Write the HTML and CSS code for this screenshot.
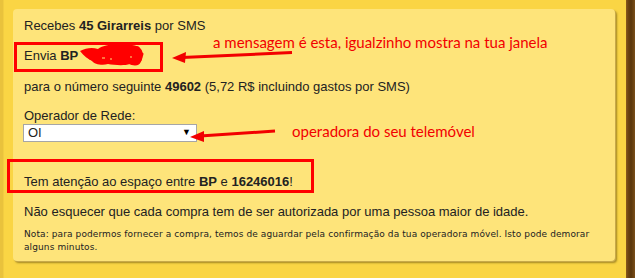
FILE: index.html
```html
<!DOCTYPE html>
<html lang="pt">
<head>
<meta charset="utf-8">
<link rel="stylesheet" href="styles.css">
</head>
<body>
<div class="frame">
  <div class="left-strip"></div>
  <div class="stage">
    <div class="panel">
      <p class="line first">Recebes <b>45 Girarreis</b> por SMS</p>
      <p class="line envia">Envia <b>BP</b></p>
      <p class="line numero">para o número seguinte <b>49602</b> (5,72 R$ incluindo gastos por SMS)</p>
      <p class="line operador">Operador de Rede:</p>
      <div class="select-wrap">
        <div class="select">OI</div>
        <span class="caret">▼</span>
      </div>
      <p class="line atencao">Tem atenção ao espaço entre <b>BP</b> e <b>16246016</b>!</p>
      <p class="line aviso">Não esquecer que cada compra tem de ser autorizada por uma pessoa maior de idade.</p>
      <p class="nota">Nota: para podermos fornecer a compra, temos de aguardar pela confirmação da tua operadora móvel. Isto pode demorar alguns minutos.</p>
    </div>
  </div>
  <div class="right-strip"></div>

  <div class="box box1"></div>
  <div class="box box2"></div>
  <svg class="scribble" width="66" height="26" viewBox="0 0 66 26">
    <path d="M0 9 C6 6, 12 5, 18 7 C24 2, 40 1, 52 3 C60 4, 64 8, 62 14 C63 20, 58 23, 50 22 C44 24, 34 23, 28 22 C22 24, 14 22, 12 19 C8 17, 4 14, 0 9 Z" fill="#ff0000"/>
    <path d="M4 10 C14 14, 20 4, 30 8 S46 2, 58 6 M10 16 C22 20, 36 14, 48 20 S60 18, 62 12" fill="none" stroke="#ff0000" stroke-width="3" stroke-linecap="round"/>
    <path d="M22 16 l3 0 M30 17 l2 0 M50 15 l2 0" stroke="#fee47a" stroke-width="1.2"/>
  </svg>
  <svg class="arrows" width="635" height="278" viewBox="0 0 635 278">
    <line x1="292" y1="52.5" x2="182" y2="57.5" stroke="#f20000" stroke-width="3"/>
    <polygon points="172,58 186,52 185,63" fill="#f20000"/>
    <line x1="275" y1="131" x2="200" y2="136" stroke="#f20000" stroke-width="3"/>
    <polygon points="190,137 204,131 204,142" fill="#f20000"/>
  </svg>
  <p class="note note1">a mensagem é esta, igualzinho mostra na tua janela</p>
  <p class="note note2">operadora do seu telemóvel</p>
</div>
</body>
</html>
```

FILE: styles.css
```css
* { box-sizing: border-box; }
html, body { margin: 0; padding: 0; }
body { width: 635px; height: 278px; overflow: hidden; }

.frame {
  position: relative;
  display: flex;
  width: 635px;
  height: 278px;
  background: #fad544;
  font-family: "Liberation Sans", Arial, sans-serif;
  color: #222;
}
.left-strip {
  width: 4px;
  background: #e9c23c;
  border-right: 1px solid #f2cc40;
}
.stage {
  flex: 1;
  padding: 9px 0 0 9px;
}
.right-strip {
  width: 9px;
  background: linear-gradient(to right, #8a5a1c 0, #6e4512 2px, #5a360c 5px, #7a4e18 9px);
}

.panel {
  width: 602px;
  height: 252px;
  background: #fee47a;
  border-radius: 4px;
  box-shadow: 1px 1px 0 #c7a94a, 2px 2px 2px rgba(90, 70, 10, 0.55);
  padding: 8px 0 0 11px;
}

.line {
  margin: 0;
  font-size: 13px;
  line-height: 15px;
}
.first { margin-top: 1px; }
.envia { margin-top: 15px; }
.numero { margin-top: 16px; }
.operador { margin-top: 14px; }
.atencao { margin-top: 32px; }
.aviso { margin-top: 15px; }

.select-wrap {
  position: relative;
  width: 174px;
  height: 18px;
  margin-top: 1px;
  margin-left: -1px;
}
.select {
  height: 18px;
  background: #fff;
  border: 1px solid #a6a6a6;
  font-size: 13px;
  line-height: 16px;
  padding-left: 4px;
}
.caret {
  position: absolute;
  right: 6px;
  top: 3px;
  font-size: 9px;
  line-height: 10px;
  color: #000;
}

.nota {
  margin: 9px 0 0;
  font-family: "DejaVu Sans", Verdana, sans-serif;
  font-size: 9px;
  letter-spacing: 0.1px;
  line-height: 13px;
  width: 575px;
  color: #222;
}

.box {
  position: absolute;
  border: 3px solid #ff0000;
}
.box1 { left: 14px; top: 42px; width: 149px; height: 30px; }
.box2 { left: 7px; top: 159px; width: 307px; height: 34px; }

.scribble { position: absolute; left: 80px; top: 42px; }
.arrows { position: absolute; left: 0; top: 0; }

.note {
  position: absolute;
  margin: 0;
  font-family: "Lato", "Open Sans", sans-serif;
  font-size: 15px;
  line-height: 16px;
  color: #f20000;
}
.note1 { left: 213px; top: 34px; }
.note2 { left: 292px; top: 123px; }
```
